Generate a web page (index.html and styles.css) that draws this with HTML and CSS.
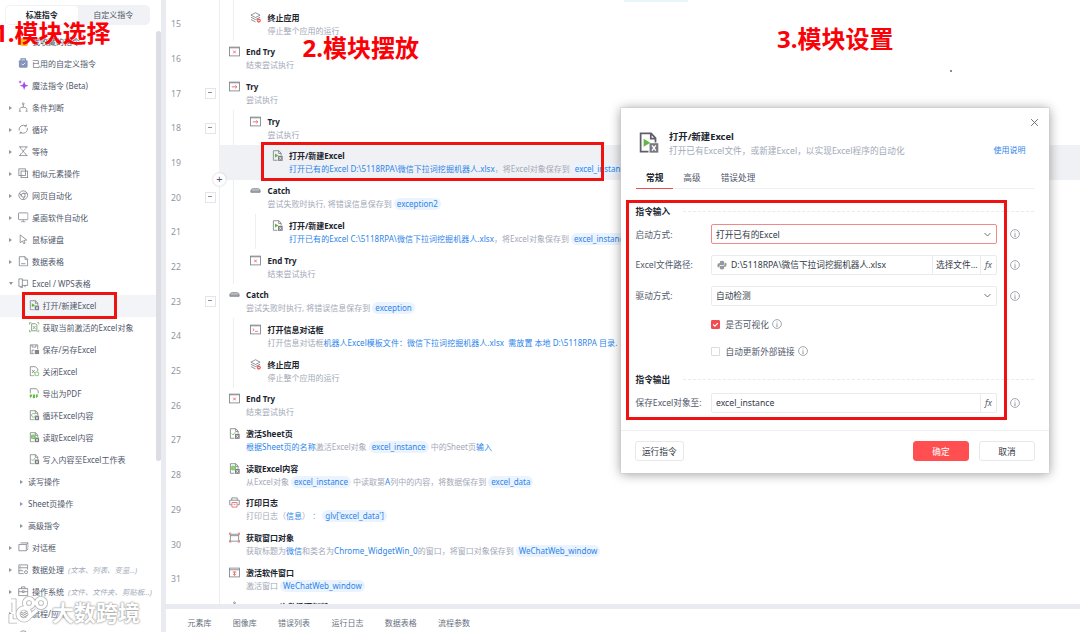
FILE: index.html
```html
<!DOCTYPE html>
<html lang="zh-CN">
<head>
    <meta charset="UTF-8">
    <meta name="viewport" content="width=device-width, initial-scale=1.0">
    <title>打开/新建Excel</title>
    <link rel="stylesheet" href="styles.css">
</head>
<body>
    <!-- icon set -->
    <svg class="defs" width="0" height="0">
        <symbol id="i-bag" viewBox="0 0 12 12"><path d="M3.5 3V1h5v2" fill="none" stroke="#7d8db5" stroke-width="1.3"/><rect x="1" y="2.5" width="10" height="8.5" rx="1.3" fill="#8494bb" stroke="none"/><path d="M4 6.5l1.6 1.6L8.3 5.4" fill="none" stroke="#fff"/></symbol>
        <symbol id="i-star" viewBox="0 0 12 12"><path d="M7 1.5l1.3 3.7L12 6.5 8.300 7.800 7 11.5 5.700 7.800 2 6.5l3.700-1.300z" fill="#a54be8" stroke="none"/><path d="M2.4 0l.6 1.600 1.600.6-1.600.6-.6 1.600-.6-1.600L.2 2.200l1.600-.6z" fill="#a54be8" stroke="none"/></symbol>
        <symbol id="i-branch" viewBox="0 0 12 12"><path d="M6 3v3M2 10V8.5C2 7 3 6 6 6s4 1 4 2.500V10M1 10.500h2.500M8.500 10.500H11"/><circle cx="6" cy="2" r="1"/></symbol>
        <symbol id="i-loop" viewBox="0 0 12 12"><path d="M1.300 7.500a5 5 0 0 1 8-5M10.700 4.500a5 5 0 0 1-8 5M9.500.5v2H7.500M2.500 11.500v-2h2"/></symbol>
        <symbol id="i-wait" viewBox="0 0 12 12"><path d="M1 1h10M1 11h10M2.500 1c0 3 3.500 3.500 3.500 5s-3.500 2-3.500 5M9.500 1c0 3-3.500 3.500-3.500 5s3.500 2 3.500 5"/></symbol>
        <symbol id="i-similar" viewBox="0 0 12 12"><rect x="1" y="1" width="7.500" height="7.500"/><rect x="3.500" y="3.500" width="7.500" height="7.500"/></symbol>
        <symbol id="i-web" viewBox="0 0 12 12"><circle cx="6" cy="6" r="5"/><circle cx="6" cy="6" r="2.200"/><path d="M6 3.800h4.500M4 7L1.800 3.500M8 7l-2.300 4"/></symbol>
        <symbol id="i-desk" viewBox="0 0 12 12"><rect x=".6" y="1" width="10.800" height="7.800" rx=".8"/><path d="M6 9v2M3.500 11.300h5"/></symbol>
        <symbol id="i-mouse" viewBox="0 0 12 12"><path d="M2.500 1v9l2.500-2 1.600 3.200 1.500-.8-1.500-3 3.400-.5z"/></symbol>
        <symbol id="i-table" viewBox="0 0 12 12"><path d="M1.500.8h6.500l3 3v7.500H1.500zM8 .8v3h3M3.500 8.800h5"/></symbol>
        <symbol id="i-excel" viewBox="0 0 12 12"><path d="M1 1h4v10H2.500M1 1v8.500H5M5 2.500h6v6H5M8 8.500v2"/></symbol>
        <symbol id="i-dialog" viewBox="0 0 12 12"><path d="M3 1h8.500v7L10 9.500M1 2.800h8.500V10H1zM9.500 2.800L11.500 1"/></symbol>
        <symbol id="i-data" viewBox="0 0 12 12"><path d="M11 6.500V1H1v10h5.500M1 4.300h10M1 7.700h5M2.800 2.700h.8M2.800 6h.8"/><circle cx="9.200" cy="9.300" r="1.700"/></symbol>
        <symbol id="i-case" viewBox="0 0 12 12"><path d="M.8 3h10.400v8H.8zM4 3V1h4v2M.8 6.500H5M7 6.500h4.200M5 5.500h2v2H5z"/></symbol>
        <symbol id="i-layers" viewBox="0 0 12 12"><path d="M6 .8l5 2.600-5 2.600-5-2.600zM1 5.700l5 2.600 5-2.600M1 8.200l5 2.600 5-2.600"/></symbol>
        <symbol id="i-stop" viewBox="0 0 12 12"><path d="M6 .8l5 2.600-5 2.600-5-2.600zM1 5.700l5 2.600 5-2.600M1 8.200l5 2.600"/><circle cx="9.600" cy="9.400" r="2.200" fill="#ee5a5a" stroke="none"/><path d="M8.500 9.400h2.200" stroke="#fff"/></symbol>
        <symbol id="i-end" viewBox="0 0 12 12"><rect x=".6" y="1.200" width="10.800" height="9.600"/><path d="M.6 2h10.800"/><path d="M4.600 5l2.800 3M7.400 5L4.600 8" stroke="#ee5a5a"/></symbol>
        <symbol id="i-try" viewBox="0 0 12 12"><rect x=".6" y="1.200" width="10.800" height="9.600"/><path d="M.6 2h10.800"/><path d="M3 6.400h5.500M6.800 4.800l1.800 1.600L6.800 8" stroke="#ee5a5a"/></symbol>
        <symbol id="i-catch" viewBox="0 0 12 12"><path d="M1 8V6.500C1 4.800 2 4 3.500 4h5C10 4 11 4.800 11 6.500V8z" fill="#c5c7cb"/><path d="M1 6.700h10"/></symbol>
        <symbol id="i-msg" viewBox="0 0 12 12"><rect x=".6" y="1.200" width="10.800" height="9.600"/><path d="M.6 2h10.800"/><path d="M3 5l1.500 1.300L3 7.700M5.500 8h3" stroke="#ee5a5a"/></symbol>
        <symbol id="i-print" viewBox="0 0 12 12"><path d="M3 3.500V1h6v2.500M3 8.500H.8v-5h10.400v5H9"/><path d="M3.200 6h5.600v5H3.200zM5 8h2" stroke="#e06a6a"/></symbol>
        <symbol id="i-getwin" viewBox="0 0 12 12"><path d="M1.500 2.500h9v7.500h-9zM1.500 4h9"/><path d="M.5 3V1.200h2M9.500 1.200h2V3M.5 9v2h2M9.500 11h2V9" stroke="#e85a5a"/></symbol>
        <symbol id="i-win" viewBox="0 0 12 12"><rect x=".6" y="1.200" width="10.800" height="9.600"/><path d="M.6 3h10.800"/><path d="M4 5.500h4M6 5v4M4.500 7.500L6 9.200l1.500-1.700" stroke="#e85a5a"/></symbol>
        <!-- excel files: base page + badge -->
        <symbol id="x-page" viewBox="0 0 12 12"><path d="M6 11.200H1.500V.8H7.500l2.500 2.700V6M7.300.8v3H10"/><rect x="6.600" y="6.400" width="5" height="5.400" fill="#77797f" stroke="none"/><path d="M8 7.600l2.200 3M10.200 7.600l-2.200 3" stroke="#fff" stroke-width=".8"/></symbol>
        <symbol id="x-open" viewBox="0 0 12 12"><use href="#x-page"/><path d="M3.200 3.800l3.800 2.300-3.800 2.300z" fill="#5fb83f" stroke="none"/></symbol>
        <symbol id="x-get" viewBox="0 0 12 12"><path d="M3 2h4.500L9 3.500V10H3z"/><path d="M4.500 4.500l3 3.500M7.500 4.500l-3 3.500M.6 3V.8h2M9.400.8h2V3M.6 9v2.200h2M9.400 11.200h2V9" stroke="#5fb83f"/></symbol>
        <symbol id="x-save" viewBox="0 0 12 12"><path d="M6 11.200H1.500V1h8.500v5M3.500 1v2.500H8V1M3.500 11V7h2.500"/><rect x="6.600" y="6.800" width="5" height="4.800" fill="#85878c" stroke="none"/></symbol>
        <symbol id="x-close" viewBox="0 0 12 12"><path d="M6 11.200H1.500V.8H7.500l2.500 2.700V6M3.500 4.500l3 3.500M6.500 4.500l-3 3.500"/><circle cx="9" cy="9" r="2.300" fill="#fff" stroke="#5fb83f"/></symbol>
        <symbol id="x-pdf" viewBox="0 0 12 12"><path d="M1.500 6V.8h7l2 2.500V6"/><path d="M1.500 11V8h1.200v1.500H1.500M5 8v3h1.200V8zM8.500 11V8H10.500M8.500 9.500h1.700" stroke="#5fb83f" stroke-width="1.200"/></symbol>
        <symbol id="x-loop" viewBox="0 0 12 12"><use href="#x-page"/><path d="M7 4.800a2.200 2.200 0 1 0-.5 3" stroke="#5fb83f"/></symbol>
        <symbol id="x-read" viewBox="0 0 12 12"><use href="#x-page"/><path d="M3 3.500h4v4H3zM3 5.500h4" fill="#bfe5b0" stroke="#5fb83f"/></symbol>
        <symbol id="x-write" viewBox="0 0 12 12"><use href="#x-page"/><path d="M3 6l1.500 1.500L7 4.500" stroke="#5fb83f"/></symbol>
        <symbol id="i-info" viewBox="0 0 12 12"><circle cx="6" cy="6" r="5.300"/><path d="M6 5v3.800M6 3v1M5.200 8.800h1.600" /></symbol>
        <symbol id="i-down" viewBox="0 0 12 12"><path d="M2 4l4 4 4-4"/></symbol>
    </svg>

    <div class="app">
        <aside class="sidebar">
            <div class="switch"><span class="on">标准指令</span><span>自定义指令</span></div>
            <div class="tree">
                <div class="node"><i></i><b class="fav"></b>我收藏的指令</div>
                <div class="node"><i></i><svg><use href="#i-bag"/></svg>已用的自定义指令</div>
                <div class="node"><i></i><svg><use href="#i-star"/></svg>魔法指令 (Beta)</div>
                <div class="node"><i class="caret"></i><svg><use href="#i-branch"/></svg>条件判断</div>
                <div class="node"><i class="caret"></i><svg><use href="#i-loop"/></svg>循环</div>
                <div class="node"><i class="caret"></i><svg><use href="#i-wait"/></svg>等待</div>
                <div class="node"><i class="caret"></i><svg><use href="#i-similar"/></svg>相似元素操作</div>
                <div class="node"><i class="caret"></i><svg><use href="#i-web"/></svg>网页自动化</div>
                <div class="node"><i class="caret"></i><svg><use href="#i-desk"/></svg>桌面软件自动化</div>
                <div class="node"><i class="caret"></i><svg><use href="#i-mouse"/></svg>鼠标键盘</div>
                <div class="node"><i class="caret"></i><svg><use href="#i-table"/></svg>数据表格</div>
                <div class="node"><i class="caret open"></i><svg><use href="#i-excel"/></svg>Excel / WPS表格</div>
                <div class="node leaf active"><svg><use href="#x-open"/></svg>打开/新建Excel</div>
                <div class="node leaf"><svg><use href="#x-get"/></svg>获取当前激活的Excel对象</div>
                <div class="node leaf"><svg><use href="#x-save"/></svg>保存/另存Excel</div>
                <div class="node leaf"><svg><use href="#x-close"/></svg>关闭Excel</div>
                <div class="node leaf"><svg><use href="#x-pdf"/></svg>导出为PDF</div>
                <div class="node leaf"><svg><use href="#x-loop"/></svg>循环Excel内容</div>
                <div class="node leaf"><svg><use href="#x-read"/></svg>读取Excel内容</div>
                <div class="node leaf"><svg><use href="#x-write"/></svg>写入内容至Excel工作表</div>
                <div class="node group"><i class="caret"></i>读写操作</div>
                <div class="node group"><i class="caret"></i>Sheet页操作</div>
                <div class="node group"><i class="caret"></i>高级指令</div>
                <div class="node"><i class="caret"></i><svg><use href="#i-dialog"/></svg>对话框</div>
                <div class="node"><i class="caret"></i><svg><use href="#i-data"/></svg>数据处理<em>(文本、列表、变量...)</em></div>
                <div class="node"><i class="caret"></i><svg><use href="#i-case"/></svg>操作系统<em>(文件、文件夹、剪贴板...)</em></div>
                <div class="node"><i class="caret"></i><svg><use href="#i-layers"/></svg>流程/应用</div>
                <div class="node"><i class="caret"></i><svg><use href="#i-web"/></svg></div>
            </div>
            <div class="scrollbar"></div>
        </aside>

        <main class="main">
            <div class="flow">
                <div class="row spacer"><span class="num"></span><span class="fold"></span><div class="step l1"></div></div>
                <div class="row"><span class="num">15</span><span class="fold"></span><div class="step l1"><svg><use href="#i-stop"/></svg><div><h4>终止应用</h4><p>停止整个应用的运行</p></div></div></div>
                <div class="row"><span class="num">16</span><span class="fold"></span><div class="step"><svg><use href="#i-end"/></svg><div><h4>End Try</h4><p>结束尝试执行</p></div></div></div>
                <div class="row"><span class="num">17</span><span class="fold box"></span><div class="step"><svg><use href="#i-try"/></svg><div><h4>Try</h4><p>尝试执行</p></div></div></div>
                <div class="row"><span class="num">18</span><span class="fold box"></span><div class="step l1"><svg><use href="#i-try"/></svg><div><h4>Try</h4><p>尝试执行</p></div></div></div>
                <div class="row"><span class="num">19</span><span class="fold"></span><div class="step l2 current"><svg><use href="#x-open"/></svg><div><h4>打开/新建Excel</h4><p><a>打开已有的Excel D:\5118RPA\微信下拉词挖掘机器人.xlsx</a>，将Excel对象保存到 <code>excel_instance</code></p></div></div></div>
                <div class="row"><span class="num">20</span><span class="fold box"></span><div class="step l1"><svg><use href="#i-catch"/></svg><div><h4>Catch</h4><p>尝试失败时执行, 将错误信息保存到 <code>exception2</code></p></div></div></div>
                <div class="row"><span class="num">21</span><span class="fold"></span><div class="step l2"><svg><use href="#x-open"/></svg><div><h4>打开/新建Excel</h4><p><a>打开已有的Excel C:\5118RPA\微信下拉词挖掘机器人.xlsx</a>，将Excel对象保存到 <code>excel_instance</code></p></div></div></div>
                <div class="row"><span class="num">22</span><span class="fold"></span><div class="step l1"><svg><use href="#i-end"/></svg><div><h4>End Try</h4><p>结束尝试执行</p></div></div></div>
                <div class="row"><span class="num">23</span><span class="fold box"></span><div class="step"><svg><use href="#i-catch"/></svg><div><h4>Catch</h4><p>尝试失败时执行, 将错误信息保存到 <code>exception</code></p></div></div></div>
                <div class="row"><span class="num">24</span><span class="fold"></span><div class="step l1"><svg><use href="#i-msg"/></svg><div><h4>打开信息对话框</h4><p>打开信息对话框<a>机器人Excel模板文件：微信下拉词挖掘机器人.xlsx&nbsp; 需放置 本地 D:\5118RPA 目录.</a></p></div></div></div>
                <div class="row"><span class="num">25</span><span class="fold"></span><div class="step l1"><svg><use href="#i-stop"/></svg><div><h4>终止应用</h4><p>停止整个应用的运行</p></div></div></div>
                <div class="row"><span class="num">26</span><span class="fold"></span><div class="step"><svg><use href="#i-end"/></svg><div><h4>End Try</h4><p>结束尝试执行</p></div></div></div>
                <div class="row"><span class="num">27</span><span class="fold"></span><div class="step"><svg><use href="#x-write"/></svg><div><h4>激活Sheet页</h4><p><a>根据Sheet页的名称</a>激活Excel对象 <code>excel_instance</code> 中的Sheet页<a>输入</a></p></div></div></div>
                <div class="row"><span class="num">28</span><span class="fold"></span><div class="step"><svg><use href="#x-read"/></svg><div><h4>读取Excel内容</h4><p>从Excel对象 <code>excel_instance</code> 中读取第<a>A</a>列中的内容，将数据保存到 <code>excel_data</code></p></div></div></div>
                <div class="row"><span class="num">29</span><span class="fold"></span><div class="step"><svg><use href="#i-print"/></svg><div><h4>打印日志</h4><p>打印日志（<a>信息</a>） ： <code>glv['excel_data']</code></p></div></div></div>
                <div class="row"><span class="num">30</span><span class="fold"></span><div class="step"><svg><use href="#i-getwin"/></svg><div><h4>获取窗口对象</h4><p>获取标题为<a>微信</a>和类名为<a>Chrome_WidgetWin_0</a>的窗口，将窗口对象保存到 <code>WeChatWeb_window</code></p></div></div></div>
                <div class="row"><span class="num">31</span><span class="fold"></span><div class="step"><svg><use href="#i-win"/></svg><div><h4>激活软件窗口</h4><p>激活窗口 <code>WeChatWeb_window</code></p></div></div></div>
                <div class="row last"><span class="num"></span><span class="fold"></span><div class="step"><svg><use href="#i-branch"/></svg><div><h4>For次数循环判断</h4></div></div></div>
            </div>
            <nav class="bottom-tabs">
                <span>元素库</span><span>图像库</span><span>错误列表</span><span>运行日志</span><span>数据表格</span><span>流程参数</span>
            </nav>
            <div class="add">+</div>
            <div class="top-tip"></div>
        </main>
    </div>

    <section class="dialog">
        <span class="close"><svg viewBox="0 0 12 12"><path d="M1.500 1.500l9 9M10.500 1.500l-9 9"/></svg></span>
        <header class="dialog-head">
            <svg><use href="#x-open"/></svg>
            <div class="dialog-title"><h3>打开/新建Excel</h3><p>打开已有Excel文件，或新建Excel，以实现Excel程序的自动化</p></div>
            <a>使用说明</a>
        </header>
        <div class="tabs"><span class="on">常规</span><span>高级</span><span>错误处理</span></div>
        <div class="form">
            <div class="legend">指令输入</div>
            <div class="field"><label>启动方式:</label><div class="input focus"><span>打开已有的Excel</span><svg class="down"><use href="#i-down"/></svg></div><svg class="info"><use href="#i-info"/></svg></div>
            <div class="field"><label>Excel文件路径:</label><div class="input"><svg class="py" viewBox="0 0 12 12"><path d="M3.500 1.500Q6 0 8.500 1.500V5Q8.500 6 7.500 6H4.500Q3 6 3 7.500V9Q0 9 .5 6 .5 3.500 3.500 3.500z"/><path d="M8.500 10.500Q6 12 3.500 10.500V8Q3.500 7 4.500 7h3Q9 7 9 5.500V3.500Q12 3 11.500 6q0 2.500-3 2.500z"/></svg><span>D:\5118RPA\微信下拉词挖掘机器人.xlsx</span><span class="pick">选择文件...</span><span class="fx">fx</span></div><svg class="info"><use href="#i-info"/></svg></div>
            <div class="field"><label>驱动方式:</label><div class="input"><span>自动检测</span><svg class="down"><use href="#i-down"/></svg></div><svg class="info"><use href="#i-info"/></svg></div>
            <div class="check first"><span class="tick on"><svg viewBox="0 0 12 12"><path d="M2 6l3 3 5-5.500"/></svg></span>是否可视化<svg class="info"><use href="#i-info"/></svg></div>
            <div class="check"><span class="tick"></span>自动更新外部链接<svg class="info"><use href="#i-info"/></svg></div>
            <div class="legend output">指令输出</div>
            <div class="field"><label>保存Excel对象至:</label><div class="input"><span>excel_instance</span><span class="fx">fx</span></div><svg class="info"><use href="#i-info"/></svg></div>
        </div>
        <footer class="dialog-foot">
            <button class="run">运行指令</button>
            <button class="ok">确定</button>
            <button>取消</button>
        </footer>
    </section>

    <!-- tutorial marks -->
    <div class="mark mark-tree"></div>
    <div class="mark mark-step"></div>
    <div class="mark mark-form"></div>
    <div class="note note-1">1.模块选择</div>
    <div class="note note-2">2.模块摆放</div>
    <div class="note note-3">3.模块设置</div>
    <div class="dot"></div>
    <div class="watermark">
        <svg viewBox="0 0 40 32" width="40" height="32">
            <g class="wm-edge"><path d="M3 6h3v11M3 19v7h6"/><circle cx="21" cy="8" r="4.500"/><circle cx="33" cy="8" r="4.500"/><circle cx="16" cy="19" r="6"/><path d="M20 23l9-8"/></g>
            <g class="wm-fill"><path d="M3 6h3v11M3 19v7h6"/><circle cx="21" cy="8" r="4.500"/><circle cx="33" cy="8" r="4.500"/><circle cx="16" cy="19" r="6"/><path d="M20 23l9-8"/></g>
        </svg>
        <span>大数跨境</span>
    </div>
</body>
</html>
```
FILE: styles.css
```css
* {
    margin: 0;
    padding: 0;
    box-sizing: border-box;
}

body {
    width: 1080px;
    height: 632px;
    overflow: hidden;
    position: relative;
    font-family: "Noto Sans", "Noto Sans CJK SC", sans-serif;
    font-size: 8px;
    color: #50586a;
    background: #fff;
}

svg {
    display: block;
    flex: none;
    fill: none;
    stroke: #7b7f87;
    stroke-width: 0.9;
}

.defs {
    position: absolute;
}

.app {
    display: flex;
    height: 632px;
}

/* Sidebar */
.sidebar {
    width: 166px;
    flex: none;
    padding: 5px 0 0;
    border-right: 5px solid #e9ebf0;
    position: relative;
    overflow: hidden;
}

.switch {
    display: flex;
    width: 145px;
    height: 20px;
    margin-left: 5px;
    padding: 1px;
    border-radius: 5px;
    background: #f1f2f6;
}

.switch span {
    flex: 1;
    line-height: 18px;
    text-align: center;
    border-radius: 4px;
}

.switch .on {
    background: #fff;
    color: #22262f;
    font-weight: bold;
}

.tree {
    padding-top: 5.500px;
}

.node {
    display: flex;
    align-items: center;
    height: 22px;
    padding-left: 9px;
    white-space: nowrap;
}

.node i {
    width: 9px;
    flex: none;
}

.node svg {
    width: 10.500px;
    height: 10.500px;
    margin-right: 3.500px;
}

.caret::before {
    content: '';
    display: block;
    width: 0;
    border: 2.500px solid transparent;
    border-left: 3.500px solid #8d96a5;
    border-right: 0;
}

.caret.open::before {
    border: 2.500px solid transparent;
    border-top: 3.500px solid #8d96a5;
    border-bottom: 0;
}

.node em {
    margin-left: 4px;
    font-size: 7.400px;
    color: #a3abba;
}

.node.leaf {
    width: 156px;
    padding-left: 29px;
}

.node.leaf svg {
    margin-right: 3px;
}

.node.active {
    background: #f3f4f7;
}

.node.group {
    padding-left: 20px;
}

.node.group i {
    width: 8px;
}

.fav {
    width: 8px;
    height: 8px;
    margin: 0 4px 0 2px;
    border-radius: 2px;
    background: #ffc21a;
}

.scrollbar {
    position: absolute;
    top: 31px;
    right: 0;
    width: 5px;
    height: 430px;
    border-radius: 3px;
    background: #dcdee3;
}

/* Flow */
.main {
    flex: 1;
    min-width: 0;
    display: flex;
    flex-direction: column;
    position: relative;
}

.flow {
    height: 604px;
    overflow: hidden;
}

.row {
    display: flex;
    height: 34.690px;
}

.row.spacer {
    height: 6.200px;
}

.row.last h4 {
    padding-left: 21px;
}

.num {
    width: 39px;
    padding-left: 5px;
    line-height: 36.500px;
    font-size: 8.700px;
    color: #8f96a4;
}

.fold {
    width: 14.500px;
    flex: none;
    border-right: 1px solid #eeeff2;
    position: relative;
}

.fold.box::before {
    content: '';
    display: block;
    width: 9px;
    height: 9px;
    margin-top: 12.500px;
    border: 1px solid #e3e5e8;
}

.fold.box::after {
    content: '';
    position: absolute;
    left: 2.500px;
    top: 16.500px;
    width: 4px;
    height: 1px;
    background: #8b8f96;
}

.step {
    flex: 1;
    min-width: 0;
    display: flex;
    padding: 5.500px 0 0 9px;
    white-space: nowrap;
}

.step.l1 {
    padding-left: 30.500px;
    background: linear-gradient(#eceef1, #eceef1) 13px 0 / 1px 100% no-repeat;
}

.step.l2 {
    padding-left: 52px;
    background: linear-gradient(#eceef1, #eceef1) 13px 0 / 1px 100% no-repeat, linear-gradient(#eceef1, #eceef1) 35px 0 / 1px 100% no-repeat;
}

.step.current {
    background: #f0f1f5;
}

.step svg {
    width: 11px;
    height: 11px;
    margin-right: 6.500px;
}

.step h4 {
    height: 12px;
    line-height: 12px;
    font-size: 8px;
    color: #20242e;
}

.step p {
    height: 13px;
    line-height: 13px;
    color: #a3a9b7;
}

.step a {
    color: #2c85ea;
    letter-spacing: 0.040px;
}

.step code {
    display: inline-block;
    height: 12px;
    line-height: 12px;
    padding: 0 3px;
    border-radius: 6px;
    font-family: inherit;
    font-size: 8px;
    color: #2c85ea;
    background: #eaf3fe;
}

.bottom-tabs {
    display: flex;
    gap: 21.300px;
    height: 28px;
    padding-left: 21.500px;
    border-top: 5px solid #e9ebf0;
    line-height: 27px;
    color: #687080;
}

.add {
    position: absolute;
    left: 47px;
    top: 172.500px;
    width: 13px;
    height: 13px;
    border-radius: 50%;
    background: #fff;
    box-shadow: 0 0 2px #b9bcc2;
    font-size: 11px;
    line-height: 12.500px;
    text-align: center;
}

.top-tip {
    position: absolute;
    left: 458px;
    top: 0;
    width: 64px;
    height: 2px;
    background: #eaf6fb;
}

/* Settings dialog */
.dialog {
    position: absolute;
    left: 621px;
    top: 108px;
    width: 427.500px;
    height: 364.500px;
    padding-top: 22px;
    background: #fff;
    box-shadow: 0 0 0 0.500px #c9cbce, 0 1px 11px rgba(0, 0, 0, 0.4);
    font-size: 8.670px;
}

.close {
    position: absolute;
    right: 10px;
    top: 10px;
}

.close svg {
    width: 9px;
    height: 9px;
    stroke: #5d626c;
    stroke-width: 1.200;
}

.dialog-head {
    display: flex;
    height: 37.500px;
    padding: 0 23px 0 16.500px;
}

.dialog-head > svg {
    width: 21px;
    height: 21px;
    margin-top: 1.500px;
    stroke: #5d6067;
    stroke-width: 1;
}

.dialog-title {
    flex: 1;
    margin-left: 10.500px;
}

.dialog-head h3 {
    height: 14px;
    line-height: 14px;
    font-size: 9.330px;
    color: #20242e;
}

.dialog-head p {
    line-height: 14px;
    letter-spacing: 0.030px;
    color: #a3a9b7;
}

.dialog-head a {
    padding-top: 13.500px;
    font-size: 8px;
    line-height: 12px;
    color: #2c85ea;
}

.tabs {
    display: flex;
    height: 21.500px;
    margin: 0 15px;
    line-height: 21.500px;
    border-bottom: 1px solid #eeeff1;
}

.tabs span {
    height: 21.500px;
    padding: 0 10px;
}

.tabs .on {
    font-weight: bold;
    color: #20242e;
    border-bottom: 1.500px solid #f24b4b;
}

.form {
    padding: 15px 15px 0 14.500px;
}

.legend {
    display: flex;
    align-items: center;
    height: 15px;
    font-weight: bold;
    color: #20242e;
}

.legend::after {
    content: '';
    flex: 1;
    margin-left: 13px;
    border-top: 1px dashed #e9ebed;
}

.field {
    display: flex;
    align-items: center;
    height: 30.670px;
}

.field label {
    width: 75.500px;
    white-space: nowrap;
}

.input {
    display: flex;
    align-items: center;
    width: 286px;
    height: 20px;
    padding-left: 4px;
    border: 1px solid #e9ebee;
    border-radius: 2px;
    color: #343a46;
}

.input span:first-of-type {
    flex: 1;
}

.input.focus {
    border-color: #f08a8a;
}

.down {
    width: 9px;
    height: 9px;
    margin-right: 4px;
    stroke: #5d626c;
    stroke-width: 1.200;
}

.py {
    width: 10px;
    height: 10px;
    margin: 0 4px 0 1px;
    fill: #96999e;
    stroke: none;
}

.pick {
    width: 48px;
    padding-left: 3px;
    line-height: 18px;
    border-left: 1px solid #e9ebee;
}

.fx {
    width: 16px;
    line-height: 18px;
    border-left: 1px solid #e9ebee;
    text-align: center;
    font-style: italic;
    color: #5d626c;
}

.info {
    width: 10px;
    height: 10px;
    margin-left: 13px;
    stroke: #868a92;
}

.check {
    display: flex;
    align-items: center;
    height: 26.500px;
    padding-left: 75.500px;
}

.check.first {
    height: 27px;
}

.check .info {
    margin-left: 3px;
}

.tick {
    width: 9px;
    height: 9px;
    margin-right: 5.500px;
    border: 1px solid #d9dbdf;
    border-radius: 1px;
}

.tick.on {
    border-color: #f24b52;
    background: #f24b52;
}

.tick svg {
    width: 7px;
    height: 7px;
    stroke: #fff;
    stroke-width: 2;
}

.legend.output {
    margin-top: 8px;
}

.dialog-foot {
    position: absolute;
    left: 0;
    right: 0;
    bottom: 0;
    display: flex;
    gap: 10px;
    height: 42.500px;
    padding: 10px 13.500px 0;
    border-top: 1px solid #eeeff1;
}

.dialog-foot button {
    width: 56px;
    height: 20px;
    border: 1px solid #e6e8eb;
    border-radius: 3px;
    background: #fff;
    font-family: inherit;
    font-size: 8.670px;
    color: #343a46;
}

.dialog-foot .run {
    width: 49.500px;
    margin-right: auto;
}

.dialog-foot .ok {
    border-color: #ff4f50;
    background: #ff4f50;
    color: #fff;
}

/* Tutorial marks */
.mark {
    position: absolute;
    border: 3px solid #ee1211;
}

.mark-tree {
    left: 22px;
    top: 292px;
    width: 95px;
    height: 27px;
}

.mark-step {
    left: 261px;
    top: 142px;
    width: 342.500px;
    height: 39px;
}

.mark-form {
    left: 626px;
    top: 200px;
    width: 381px;
    height: 220px;
}

.note {
    position: absolute;
    height: 30px;
    line-height: 30px;
    font-size: 24px;
    font-weight: bold;
    color: #fb0006;
    white-space: nowrap;
}

.note-1 {
    left: -6px;
    top: 18px;
}

.note-2 {
    left: 302.500px;
    top: 33px;
}

.note-3 {
    left: 777px;
    top: 24px;
}

.dot {
    position: absolute;
    left: 950px;
    top: 70px;
    width: 2px;
    height: 2px;
    background: #8c8c8c;
}

.watermark {
    position: absolute;
    left: 8px;
    top: 595px;
    display: flex;
    align-items: center;
    gap: 4px;
    height: 32px;
    font-size: 22px;
    font-weight: bold;
    color: #fff;
    text-shadow: 0 0 2px #8e8e8e, 0 0 2px #a5a5a5;
}

.wm-edge {
    stroke: #b8b8b8;
    stroke-width: 5;
}

.wm-fill {
    stroke: #fff;
    stroke-width: 3.300;
}
```
